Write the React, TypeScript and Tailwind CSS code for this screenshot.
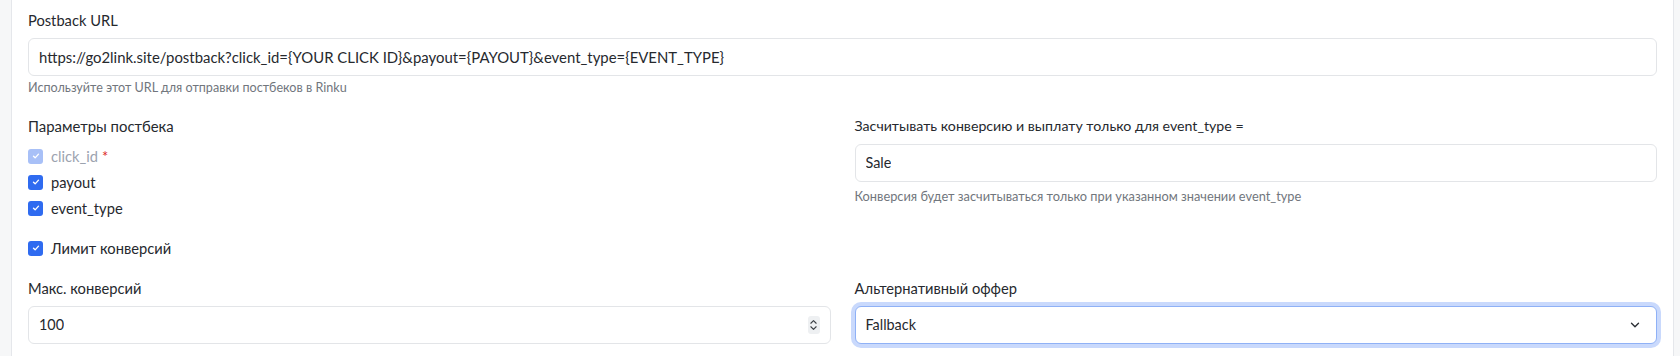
import React from "react";

const font = { fontFamily: "Lato, 'Noto Sans', sans-serif" };

interface CheckRowProps {
  label: string;
  disabled?: boolean;
  required?: boolean;
}

const CheckIcon: React.FC<{ disabled?: boolean }> = ({ disabled }) => (
  <span
    className={`flex h-[15px] w-[15px] shrink-0 items-center justify-center rounded-[3px] ${
      disabled ? "bg-[#a8c0f7]" : "bg-[#2f6bf0]"
    }`}
  >
    <svg viewBox="0 0 12 12" className="h-[10px] w-[10px]" fill="none">
      <path
        d="M3 6.2l2 2 4-4.4"
        stroke="white"
        strokeWidth="1.6"
        strokeLinecap="round"
        strokeLinejoin="round"
      />
    </svg>
  </span>
);

const CheckRow: React.FC<CheckRowProps> = ({ label, disabled, required }) => (
  <label className="flex h-5 items-center gap-2">
    <CheckIcon disabled={disabled} />
    <span className={`text-[14.7px] ${disabled ? "text-[#9ca3af]" : "text-[#26292e]"}`}>
      {label}
      {required && <span className="ml-1 text-[#dc2626]">*</span>}
    </span>
  </label>
);

const Label: React.FC<{ children: React.ReactNode; className?: string }> = ({
  children,
  className = "text-[14.7px]",
}) => <p className={`mb-2 leading-5 text-[#26292e] ${className}`}>{children}</p>;

const Hint: React.FC<{ children: React.ReactNode }> = ({ children }) => (
  <p className="mt-1.5 text-[12.8px] leading-4 text-[#71767d]">{children}</p>
);

const TextBox: React.FC<{ value: string; size?: string; children?: React.ReactNode }> = ({
  value,
  size = "text-[14.4px]",
  children,
}) => (
  <div
    className={`flex h-[38px] items-center justify-between rounded-md border border-[#e3e5e8] bg-white px-[10px] text-[#26292e] ${size}`}
  >
    <span className="truncate">{value}</span>
    {children}
  </div>
);

const Spinner: React.FC = () => (
  <span className="flex h-[18px] w-[12px] items-center justify-center rounded-[3px] bg-[#eef0f2]">
    <svg viewBox="0 0 10 16" className="h-[14px] w-[9px]" fill="none">
      <path d="M2 6l3-3 3 3M2 10l3 3 3-3" stroke="#3b3f45" strokeWidth="1.3" strokeLinecap="round" strokeLinejoin="round" />
    </svg>
  </span>
);

const App: React.FC = () => {
  return (
    <div className="flex h-[356px] w-full bg-[#f6f7f8]" style={font}>
      <div className="ml-[11px] mr-[6px] flex-1 border-x border-[#e5e7eb] bg-white px-4 pt-2.5">
        <div>
          <Label>Postback URL</Label>
          <TextBox
            size="text-[14.9px]"
            value="https://go2link.site/postback?click_id={YOUR CLICK ID}&payout={PAYOUT}&event_type={EVENT_TYPE}"
          />
          <p className="mt-1 text-[12.6px] leading-4 text-[#71767d]">
            Используйте этот URL для отправки постбеков в Rinku
          </p>
        </div>

        <div className="mt-5 grid grid-cols-2 gap-6">
          <div>
            <p className="mb-2.5 text-[14.9px] leading-5 text-[#26292e]">Параметры постбека</p>
            <div className="flex flex-col gap-1.5">
              <CheckRow label="click_id" disabled required />
              <CheckRow label="payout" />
              <CheckRow label="event_type" />
            </div>
          </div>
          <div>
            <Label className="text-[14.2px]">
              Засчитывать конверсию и выплату только для event_type =
            </Label>
            <TextBox value="Sale" />
            <Hint>Конверсия будет засчитываться только при указанном значении event_type</Hint>
          </div>
        </div>

        <div className="mt-5">
          <CheckRow label="Лимит конверсий" />
        </div>

        <div className="mt-5 grid grid-cols-2 gap-6">
          <div>
            <Label>Макс. конверсий</Label>
            <TextBox value="100">
              <Spinner />
            </TextBox>
          </div>
          <div>
            <Label>Альтернативный оффер</Label>
            <div className="flex h-[38px] items-center justify-between rounded-md border border-[#8fb1f6] bg-white px-[10px] text-[14.4px] text-[#26292e] ring-4 ring-[#c9d9fc]">
              <span>Fallback</span>
              <svg viewBox="0 0 16 16" className="mr-[4px] h-[14px] w-[14px]" fill="none">
                <path d="M4 6l4 4 4-4" stroke="#2b2f35" strokeWidth="1.6" strokeLinecap="round" strokeLinejoin="round" />
              </svg>
            </div>
          </div>
        </div>
      </div>
    </div>
  );
};

export default App;
